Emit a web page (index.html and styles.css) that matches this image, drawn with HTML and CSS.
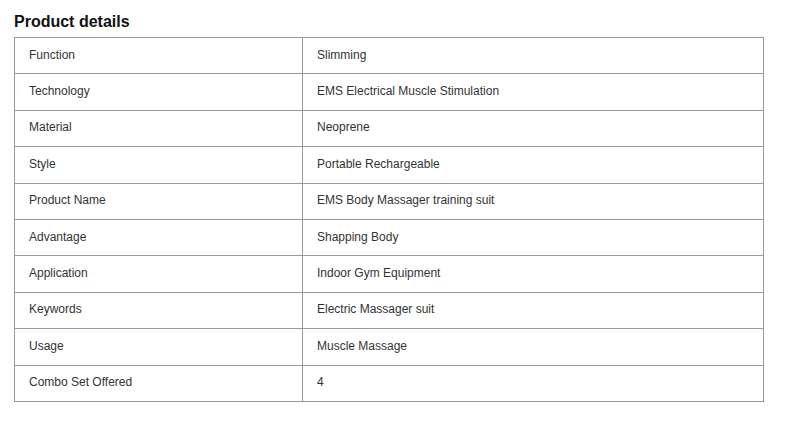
FILE: index.html
```html
<!DOCTYPE html>
<html>
<head>
<meta charset="utf-8">
<link rel="stylesheet" href="styles.css">
</head>
<body>
<div class="wrap">
  <h2 class="title">Product details</h2>
  <table class="details">
    <tr><td>Function</td><td>Slimming</td></tr>
    <tr><td>Technology</td><td>EMS Electrical Muscle Stimulation</td></tr>
    <tr><td>Material</td><td>Neoprene</td></tr>
    <tr><td>Style</td><td>Portable Rechargeable</td></tr>
    <tr><td>Product Name</td><td>EMS Body Massager training suit</td></tr>
    <tr><td>Advantage</td><td>Shapping Body</td></tr>
    <tr><td>Application</td><td>Indoor Gym Equipment</td></tr>
    <tr><td>Keywords</td><td>Electric Massager suit</td></tr>
    <tr><td>Usage</td><td>Muscle Massage</td></tr>
    <tr><td>Combo Set Offered</td><td>4</td></tr>
  </table>
</div>
</body>
</html>
```
FILE: styles.css
```css
html, body {
  margin: 0;
  padding: 0;
  background: #fff;
}
.wrap {
  padding: 12px 0 0 14px;
  font-family: "Liberation Sans", Arial, sans-serif;
}
.title {
  margin: 0 0 6px 0;
  font-size: 16px;
  font-weight: bold;
  color: #111;
  line-height: 19px;
}
.details {
  border-collapse: collapse;
  width: 750px;
  border: 1px solid #999;
  font-size: 12px;
  color: #333;
}
.details td {
  border: 1px solid #999;
  padding: 0 14px 2px 14px;
  height: 36.4px;
  box-sizing: border-box;
  line-height: 14px;
  vertical-align: middle;
}
.details td:first-child {
  width: 288px;
}
```
